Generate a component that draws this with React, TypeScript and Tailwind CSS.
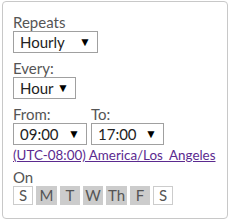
import React from 'react';

const days = [
  { label: 'S', on: false, w: 'w-[20px]' },
  { label: 'M', on: true, w: 'w-[21px]' },
  { label: 'T', on: true, w: 'w-[20px]' },
  { label: 'W', on: true, w: 'w-[20px]' },
  { label: 'Th', on: true, w: 'w-[21px]' },
  { label: 'F', on: true, w: 'w-[20px]' },
  { label: 'S', on: false, w: 'w-[20px]' },
];

const Select: React.FC<{ value: string; className?: string }> = ({ value, className }) => (
  <div
    className={
      'flex items-center justify-between h-[22px] border border-[#a0a0a0] bg-white pl-[6px] pr-[6px] text-[15px] leading-none text-[#222] ' +
      (className || '')
    }
  >
    <span>{value}</span>
    <span className="text-[12px] text-black">▼</span>
  </div>
);

const Label: React.FC<{ children: React.ReactNode; className?: string }> = ({ children, className }) => (
  <div className={'text-[15px] leading-[18px] text-[#555] ' + (className || '')}>{children}</div>
);

export default function App() {
  return (
    <div className="bg-white w-[229px] h-[220px] pt-px pl-[2px] font-['Lato',sans-serif]">
      <div className="w-[226px] h-[218px] border border-[#c8c8c8] rounded-[4px] pl-[10px] pt-[11px] flex flex-col">
        <Label>Repeats</Label>
        <Select value="Hourly" className="w-[85px]" />
        <Label className="mt-[6px]">Every:</Label>
        <Select value="Hour" className="w-[63px]" />
        <div className="flex gap-[4px] mt-[6px]">
          <div className="flex flex-col">
            <Label>From:</Label>
            <Select value="09:00" className="w-[74px]" />
          </div>
          <div className="flex flex-col">
            <Label>To:</Label>
            <Select value="17:00" className="w-[73px]" />
          </div>
        </div>
        <a href="#" className="text-[13.4px] leading-[16px] text-[#5b2a8f] underline mt-[2px]">
          (UTC-08:00) America/Los_Angeles
        </a>
        <Label className="mt-[5px]">On</Label>
        <div className="flex gap-[3px]">
          {days.map((d, i) => (
            <div
              key={i}
              className={
                'h-[19px] flex items-center justify-center text-[15px] leading-none border text-[#555] ' +
                d.w +
                (d.on ? ' bg-[#ccc] border-[#ccc]' : ' bg-white border-[#ccc]')
              }
            >
              {d.label}
            </div>
          ))}
        </div>
      </div>
    </div>
  );
}
